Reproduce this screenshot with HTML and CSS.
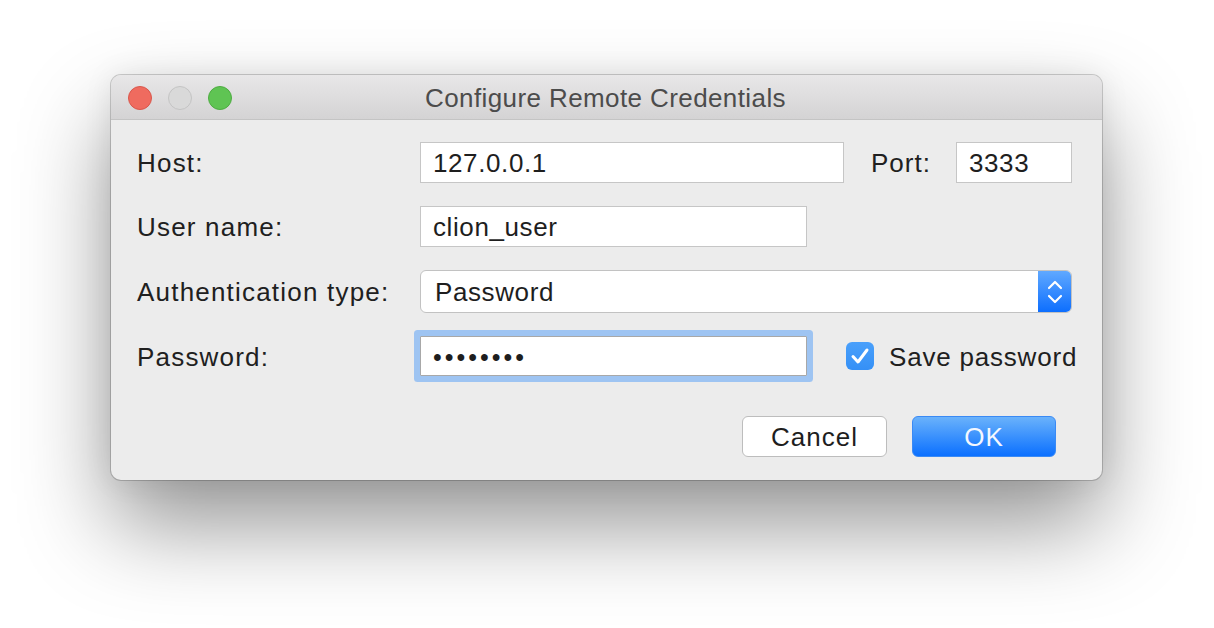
FILE: index.html
```html
<!DOCTYPE html>
<html>
<head>
<meta charset="utf-8">
<link rel="stylesheet" href="styles.css">
</head>
<body>
<div class="stage">
  <div class="dialog">
    <div class="titlebar">
      <div class="lights">
        <span class="light red"></span>
        <span class="light gray"></span>
        <span class="light green"></span>
      </div>
      <div class="title">Configure Remote Credentials</div>
    </div>
    <div class="content">
      <div class="row">
        <div class="label">Host:</div>
        <div class="field host">127.0.0.1</div>
        <div class="label port-label">Port:</div>
        <div class="field port">3333</div>
      </div>
      <div class="row">
        <div class="label">User name:</div>
        <div class="field user">clion_user</div>
      </div>
      <div class="row">
        <div class="label">Authentication type:</div>
        <div class="select">
          <div class="select-text">Password</div>
          <div class="select-btn">
            <svg width="16" height="26" viewBox="0 0 16 26"><path d="M2 9 L8 3 L14 9" fill="none" stroke="#fff" stroke-width="2.2" stroke-linecap="round" stroke-linejoin="round"/><path d="M2 17 L8 23 L14 17" fill="none" stroke="#fff" stroke-width="2.2" stroke-linecap="round" stroke-linejoin="round"/></svg>
          </div>
        </div>
      </div>
      <div class="row">
        <div class="label">Password:</div>
        <div class="field pass focused">••••••••</div>
        <div class="check">
          <svg width="20" height="18" viewBox="0 0 20 18"><path d="M3 9.5 L8 15 L17 3" fill="none" stroke="#fff" stroke-width="3" stroke-linecap="round" stroke-linejoin="round"/></svg>
        </div>
        <div class="check-label">Save password</div>
      </div>
      <div class="buttons">
        <div class="btn cancel">Cancel</div>
        <div class="btn ok">OK</div>
      </div>
    </div>
  </div>
</div>
</body>
</html>
```

FILE: styles.css
```css
* { box-sizing: border-box; }
html, body {
  margin: 0;
  padding: 0;
  background: #ffffff;
  width: 1214px;
  height: 628px;
  overflow: hidden;
}
.stage {
  padding: 75px 0 0 111px;
  font-family: "Liberation Sans", Arial, sans-serif;
}
.dialog {
  width: 991px;
  height: 405px;
  background: #ececec;
  border-radius: 10px;
  box-shadow: 0 0 0 1px rgba(0,0,0,0.18), 0 45px 90px rgba(0,0,0,0.42), 0 0 30px rgba(0,0,0,0.08);
  display: flex;
  flex-direction: column;
  overflow: hidden;
}
.titlebar {
  height: 45px;
  flex: none;
  background: linear-gradient(#e8e7e8, #d4d3d4);
  border-bottom: 1px solid #c4c4c4;
  display: flex;
  align-items: center;
  position: relative;
}
.lights {
  display: flex;
  gap: 16px;
  padding-left: 17px;
  padding-top: 1px;
}
.light {
  width: 24px;
  height: 24px;
  border-radius: 50%;
  display: block;
}
.red { background: #ef6b5f; border: 1px solid #d9574c; }
.gray { background: #d9d9d9; border: 1px solid #c4c4c4; }
.green { background: #5fc453; border: 1px solid #4eac42; }
.title {
  flex: 1;
  text-align: center;
  font-size: 26px;
  letter-spacing: 0.4px;
  color: #4c4c4c;
  margin-left: 7px;
  margin-right: 130px;
  padding-top: 3px;
}
.content {
  padding: 22px 30px 0 26px;
  display: flex;
  flex-direction: column;
  gap: 23px;
}
.row {
  display: flex;
  align-items: center;
  font-size: 26px;
  color: #202020;
  white-space: nowrap;
}
.row > * { flex: none; }
.label {
  width: 283px;
  letter-spacing: 1.2px;
  padding-top: 2px;
}
.field {
  height: 41px;
  background: #fff;
  border: 1px solid #c6c6c6;
  padding-left: 12px;
  padding-top: 2px;
  display: flex;
  align-items: center;
  letter-spacing: 0.6px;
  color: #1e1e1e;
}
.host { width: 424px; }
.port-label {
  width: 85px;
  margin-left: 27px;
  letter-spacing: 1px;
}
.port { width: 116px; }
.user { width: 387px; }
.select {
  width: 652px;
  height: 43px;
  background: #fff;
  border: 1px solid #c2c2c2;
  border-radius: 6px;
  display: flex;
  overflow: hidden;
}
.select-text {
  flex: 1;
  padding-left: 14px;
  padding-top: 2px;
  display: flex;
  align-items: center;
  letter-spacing: 0.6px;
  color: #1e1e1e;
}
.select-btn {
  width: 34px;
  margin: -1px -1px -1px 0;
  background: linear-gradient(#62aaff, #0b6dfe);
  display: flex;
  align-items: center;
  justify-content: center;
  border-radius: 0 6px 6px 0;
}
.pass {
  width: 387px;
  height: 40px;
  border-color: #a8a8a8;
  border-radius: 1px;
  box-shadow: 0 0 0 6px #9ec4f2;
  letter-spacing: 3px;
  font-size: 25px;
  padding-left: 12px;
}
.check {
  width: 28px;
  height: 28px;
  margin-left: 39px;
  border-radius: 6px;
  background: linear-gradient(#4aa0fb, #3590f6);
  display: flex;
  align-items: center;
  justify-content: center;
}
.check-label {
  margin-left: 15px;
  letter-spacing: 0.8px;
  padding-top: 2px;
}
.buttons {
  display: flex;
  justify-content: flex-end;
  gap: 25px;
  margin-top: 17px;
  padding-right: 16px;
}
.btn {
  height: 41px;
  border-radius: 6px;
  display: flex;
  align-items: center;
  justify-content: center;
  font-size: 26px;
  letter-spacing: 1px;
  padding-top: 2px;
}
.cancel {
  width: 145px;
  background: #fff;
  border: 1px solid #bdbdbd;
  color: #1e1e1e;
}
.ok {
  width: 144px;
  background: linear-gradient(#6ab2fb, #0b70ff);
  color: #f4f8ff;
  border: 1px solid #3a8af5;
}
```
